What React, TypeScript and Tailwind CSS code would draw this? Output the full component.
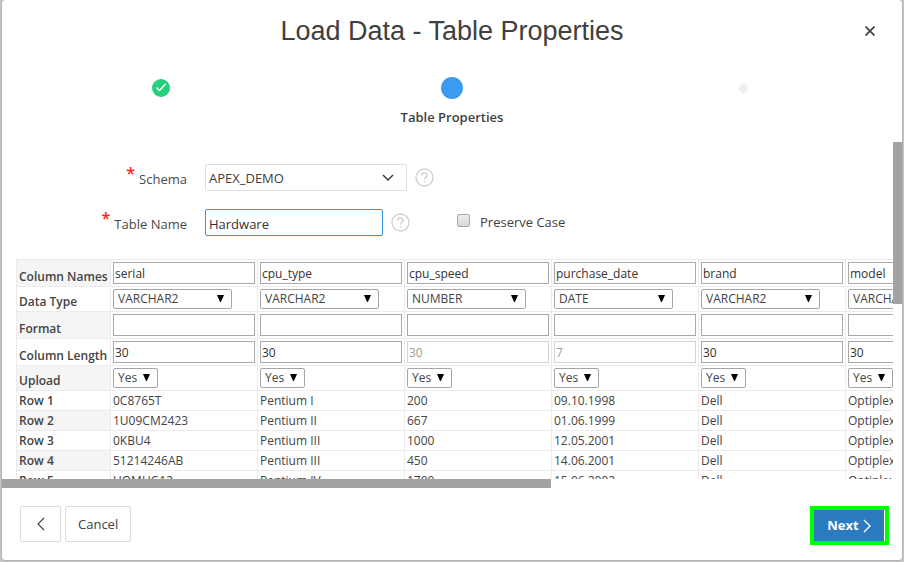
import React from "react";

type Column = {
  name: string;
  type: string;
  length: string;
  lengthDisabled?: boolean;
  values: string[];
};

const columns: Column[] = [
  { name: "serial", type: "VARCHAR2", length: "30", values: ["0C8765T", "1U09CM2423", "0KBU4", "51214246AB", "UOMUG12"] },
  { name: "cpu_type", type: "VARCHAR2", length: "30", values: ["Pentium I", "Pentium II", "Pentium III", "Pentium III", "Pentium IV"] },
  { name: "cpu_speed", type: "NUMBER", length: "30", lengthDisabled: true, values: ["200", "667", "1000", "450", "1700"] },
  { name: "purchase_date", type: "DATE", length: "7", lengthDisabled: true, values: ["09.10.1998", "01.06.1999", "12.05.2001", "14.06.2001", "15.06.2002"] },
  { name: "brand", type: "VARCHAR2", length: "30", values: ["Dell", "Dell", "Dell", "Dell", "Dell"] },
  { name: "model", type: "VARCHAR2", length: "30", values: ["Optiplex", "Optiplex", "Optiplex", "Optiplex", "Optiplex"] },
];

const rowLabels = ["Row 1", "Row 2", "Row 3", "Row 4", "Row 5"];
const dataTypes = ["VARCHAR2", "NUMBER", "DATE"];

function HelpButton({ label }: { label: string }) {
  return (
    <button type="button" aria-label={label} className="ml-2 size-[19px] shrink-0">
      <svg viewBox="0 0 19 19" className="size-[19px]" fill="none" stroke="#d2d2d2">
        <circle cx="9.5" cy="9.5" r="8.5" strokeWidth="1.4" />
        <path d="M6.9 7.4a2.6 2.6 0 1 1 3.9 2.2c-.9.5-1.3.9-1.3 2" strokeWidth="1.5" />
        <path d="M9.5 13v1.6" strokeWidth="1.6" />
      </svg>
    </button>
  );
}

function FieldLabel({ htmlFor, children }: { htmlFor: string; children: string }) {
  return (
    <label htmlFor={htmlFor} className="mr-[18px] flex h-[27px] w-[185px] justify-end gap-1 text-[13px] leading-[27px] text-[#4a4a4a]">
      <span aria-hidden="true" className="text-[16px] leading-[18px] font-semibold text-[#ff2020]">*</span>
      <span className="pt-[2px]">{children}</span>
    </label>
  );
}

function CellInput({ label, value, disabled }: { label: string; value: string; disabled?: boolean }) {
  return (
    <input
      aria-label={label}
      defaultValue={value}
      disabled={disabled}
      className="block h-[22px] w-[142px] border border-[#a9a9a9] bg-white px-px text-[12px] text-[#333] disabled:border-[#d4d4d4] disabled:text-[#999]"
    />
  );
}

function CellSelect({ label, value, options, wide }: { label: string; value: string; options: string[]; wide?: boolean }) {
  return (
    <div className={wide ? "relative h-5 w-[119px]" : "relative h-5 w-[45px]"}>
      <select
        aria-label={label}
        defaultValue={value}
        className="block h-5 w-full appearance-none rounded-xs border border-[#a6a6a6] bg-white pl-1 text-[12px] leading-[18px] text-[#444]"
      >
        {options.map((option) => (
          <option key={option}>{option}</option>
        ))}
      </select>
      <svg viewBox="0 0 7 7" className="pointer-events-none absolute top-[6px] right-2 size-[7px]" fill="#000">
        <path d="M0 0h7L3.9 7h-.8z" />
      </svg>
    </div>
  );
}

function TableRow({ label, height, shaded, render }: { label: string; height: string; shaded: boolean; render: (column: Column) => React.ReactNode }) {
  return (
    <tr className={height}>
      <th scope="row" className={`border border-[#ebebeb] px-[2px] pb-px text-left align-bottom font-semibold leading-4 whitespace-nowrap ${shaded ? "bg-[#f5f5f5]" : "bg-white"}`}>
        {label}
      </th>
      {columns.map((column) => (
        <td key={column.name} className="border border-[#ebebeb] px-[2px] py-0 align-middle leading-4 whitespace-nowrap">
          {render(column)}
        </td>
      ))}
    </tr>
  );
}

export default function App() {
  return (
    <div className="h-screen bg-[#c9c9c9] px-[2px] pb-[2px] font-['Open_Sans','Noto_Sans',sans-serif] text-[#444]">
      <main className="flex h-full flex-col overflow-hidden rounded-[3px] bg-white shadow-[0_0_2px_#777]">
        <header className="h-[142px] shrink-0">
          <div className="grid h-[62px] grid-cols-[48px_1fr_48px] items-center">
            <h1 className="col-start-2 text-center font-['Liberation_Sans',Arial,sans-serif] text-[27px] leading-8 text-[#404040]">
              Load Data - Table Properties
            </h1>
            <button type="button" aria-label="Close" className="ml-[6px] flex size-5 items-center justify-center">
              <svg viewBox="0 0 9 9" className="size-[10px]" stroke="#444" strokeWidth="1.6">
                <path d="M.5.5l8 8M8.5.5l-8 8" />
              </svg>
            </button>
          </div>
          <ol className="grid grid-cols-3 px-[13px] pt-[13px]">
            <li className="flex h-[26px] items-center justify-center" aria-label="Completed step">
              <svg viewBox="0 0 18 18" className="size-[18px]">
                <circle cx="9" cy="9" r="9" fill="#25d07c" />
                <path d="M4.5 8.5l3 3 6-6.5" fill="none" stroke="#fff" strokeWidth="1.5" />
              </svg>
            </li>
            <li className="flex flex-col items-center">
              <span className="flex h-[26px] items-center">
                <span className="size-[22px] rounded-full bg-[#3a9bf0]" />
              </span>
              <span className="mt-[6px] text-[13px] leading-5 font-semibold text-[#404040]">Table Properties</span>
            </li>
            <li className="flex h-[26px] items-center justify-center" aria-label="Upcoming step">
              <span className="size-[9px] rounded-full bg-[#eee]" />
            </li>
          </ol>
        </header>

        <section className="grid min-h-0 flex-1 grid-cols-[minmax(0,1fr)_9px] grid-rows-[minmax(0,1fr)_9px]">
          <div className="overflow-hidden pt-[22px]">
            <div className="flex flex-col gap-[18px]">
              <div className="flex items-center">
                <FieldLabel htmlFor="schema">Schema</FieldLabel>
                <div className="relative w-[202px]">
                  <select
                    id="schema"
                    defaultValue="APEX_DEMO"
                    className="block h-[27px] w-full appearance-none rounded-xs border border-[#dfdfdf] bg-white px-[3px] pt-[2px] text-[13px] text-[#404040]"
                  >
                    <option>APEX_DEMO</option>
                  </select>
                  <svg viewBox="0 0 12 8" className="pointer-events-none absolute top-[10px] right-[13px] h-2 w-3" fill="none" stroke="#333" strokeWidth="1.4">
                    <path d="M1 1l5 5 5-5" />
                  </svg>
                </div>
                <HelpButton label="Help on Schema" />
              </div>
              <div className="flex items-center">
                <FieldLabel htmlFor="table-name">Table Name</FieldLabel>
                <input
                  id="table-name"
                  defaultValue="Hardware"
                  className="h-[27px] w-[178px] rounded-xs border border-[#3a96e0] bg-white px-[3px] pt-[2px] text-[13px] text-[#333]"
                />
                <HelpButton label="Help on Table Name" />
                <input
                  id="preserve-case"
                  type="checkbox"
                  className="mb-[5px] ml-[47px] size-[13px] appearance-none rounded-xs border border-[#a8a8a8] bg-linear-to-b from-[#ececec] to-[#d8d8d8]"
                />
                <label htmlFor="preserve-case" className="ml-[10px] text-[13px] text-[#404040]">Preserve Case</label>
              </div>
            </div>

            <table className="mt-[23px] ml-[14px] w-[977px] table-fixed border-collapse text-[12px]">
              <colgroup>
                <col className="w-[94px]" />
                {columns.map((column) => (
                  <col key={column.name} className="w-[147px]" />
                ))}
              </colgroup>
              <tbody>
                <TableRow label="Column Names" height="h-[27px]" shaded render={(c) => <CellInput label={`${c.name} column name`} value={c.name} />} />
                <TableRow label="Data Type" height="h-[25px]" shaded={false} render={(c) => <CellSelect label={`${c.name} data type`} value={c.type} options={dataTypes} wide />} />
                <TableRow label="Format" height="h-[27px]" shaded render={(c) => <CellInput label={`${c.name} format`} value="" />} />
                <TableRow label="Column Length" height="h-[27px]" shaded={false} render={(c) => <CellInput label={`${c.name} length`} value={c.length} disabled={c.lengthDisabled} />} />
                <TableRow label="Upload" height="h-[25px]" shaded render={(c) => <CellSelect label={`Upload ${c.name}`} value="Yes" options={["Yes", "No"]} />} />
                {rowLabels.map((label, row) => (
                  <TableRow key={label} label={label} height="h-5" shaded={row % 2 === 1} render={(c) => c.values[row]} />
                ))}
              </tbody>
            </table>
          </div>
          <div>
            <div className="h-[48%] bg-[#a3a3a3]" />
          </div>
          <div className="col-span-2">
            <div className="h-full w-[61%] bg-[#a3a3a3]" />
          </div>
        </section>

        <footer className="flex h-[72px] shrink-0 items-start gap-1 px-[18px] pt-[18px] text-[13px]">
          <button type="button" aria-label="Previous" className="flex h-9 w-[41px] items-center justify-center rounded-xs border border-[#dcdcdc]">
            <svg viewBox="0 0 8 14" className="h-[14px] w-2" fill="none" stroke="#444" strokeWidth="1.2">
              <path d="M7 1L1 7l6 6" />
            </svg>
          </button>
          <button type="button" className="h-9 rounded-xs border border-[#dcdcdc] px-3 pt-[2px] text-[#404040]">Cancel</button>
          <div className="-mr-[5px] ml-auto border-4 border-[#00ff00] bg-white pr-px">
            <button type="button" className="flex h-[31px] w-[70px] items-center justify-center gap-1 bg-[#2b7bc0] font-bold text-white">
              Next
              <svg viewBox="0 0 8 14" className="h-[14px] w-2" fill="none" stroke="#fff" strokeWidth="1.4">
                <path d="M1 1l6 6-6 6" />
              </svg>
            </button>
          </div>
        </footer>
      </main>
    </div>
  );
}
